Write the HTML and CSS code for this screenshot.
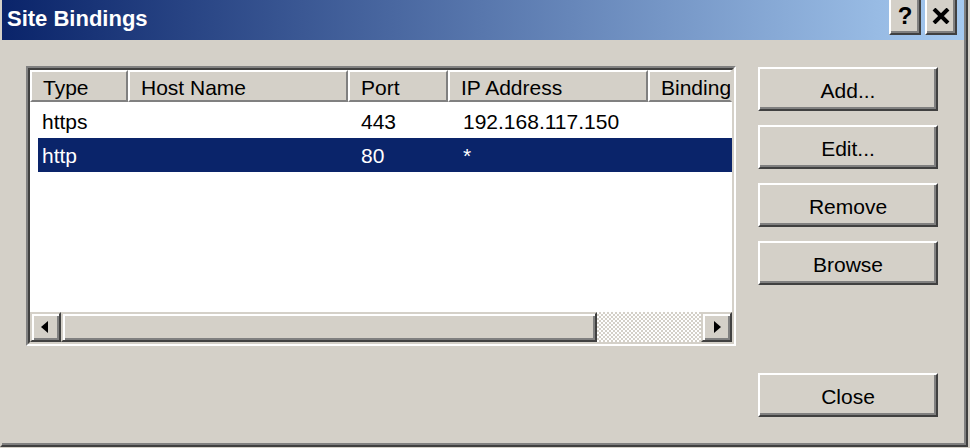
FILE: index.html
```html
<!DOCTYPE html>
<html lang="en">
<head>
    <meta charset="UTF-8">
    <title>Site Bindings</title>
    <link rel="stylesheet" href="styles.css">
</head>
<body>
    <div class="window">
        <div class="titlebar">
            <span class="title">Site Bindings</span>
            <div class="caption-btns">
                <div class="cap-btn help">?</div>
                <div class="cap-btn">
                    <svg width="18" height="16" viewBox="0 0 18 16">
                        <path d="M2 1 L16 15 M16 1 L2 15" stroke="#000" stroke-width="4" fill="none"/>
                    </svg>
                </div>
            </div>
        </div>

        <div class="content">
            <div class="listbox">
                <div class="list-inner">
                    <div class="header">
                        <div class="hcell">Type</div>
                        <div class="hcell">Host Name</div>
                        <div class="hcell">Port</div>
                        <div class="hcell">IP Address</div>
                        <div class="hcell last">Binding</div>
                    </div>
                    <div class="rows">
                        <div class="row">
                            <div class="cell first">https</div>
                            <div class="cell"></div>
                            <div class="cell">443</div>
                            <div class="cell ip">192.168.117.150</div>
                            <div class="cell"></div>
                        </div>
                        <div class="row selected">
                            <div class="cell first">http</div>
                            <div class="cell"></div>
                            <div class="cell">80</div>
                            <div class="cell ip">*</div>
                            <div class="cell"></div>
                        </div>
                    </div>
                    <div class="hscroll">
                        <div class="sb-btn"><span class="arrow-left"></span></div>
                        <div class="sb-thumb"></div>
                        <div class="sb-track"></div>
                        <div class="sb-btn"><span class="arrow-right"></span></div>
                    </div>
                </div>
            </div>

            <div class="actions">
                <div class="btn">Add...</div>
                <div class="btn">Edit...</div>
                <div class="btn">Remove</div>
                <div class="btn">Browse</div>
                <div class="btn close">Close</div>
            </div>
        </div>
    </div>
</body>
</html>
```

FILE: styles.css
```css
html, body {
    margin: 0;
    background-color: #d4d0c8;
    overflow: hidden;
}
body {
    font-family: "Liberation Sans", Arial, sans-serif;
    font-size: 21px;
    color: #000;
}
div.window {
    width: 968px;
    height: 447px;
    box-sizing: border-box;
    background-color: #d4d0c8;
    border-left: 2px solid #d4d0c8;
    border-right: 2px solid #404040;
    border-bottom: 2px solid #404040;
    box-shadow: inset -2px -2px 0 #808080;
    display: flex;
    flex-direction: column;
}

/* title bar */
div.titlebar {
    height: 40px;
    flex: none;
    margin-right: 2px;
    box-sizing: border-box;
    padding: 0 7px 3px 5px;
    background: linear-gradient(to right, #0a246a, #a6caf0);
    display: flex;
    align-items: center;
    justify-content: space-between;
}
span.title {
    color: white;
    font-weight: bold;
    font-size: 22px;
}
div.caption-btns {
    display: flex;
    gap: 4px;
    align-self: flex-start;
    margin-top: -2px;
}
div.cap-btn {
    width: 32px;
    height: 37px;
    box-sizing: border-box;
    background-color: #d4d0c8;
    border: 2px solid;
    border-color: #fff #404040 #404040 #fff;
    box-shadow: inset -2px -2px 0 #808080;
    display: flex;
    align-items: center;
    justify-content: center;
    padding-bottom: 2px;
}
div.cap-btn.help {
    font-weight: bold;
    font-size: 24px;
    line-height: 1;
}

/* main area */
div.content {
    display: flex;
    gap: 22px;
    padding: 26px 0 0 24px;
}
div.listbox {
    width: 710px;
    height: 280px;
    box-sizing: border-box;
    border: 2px solid;
    border-color: #808080 #fff #fff #808080;
}
div.list-inner {
    height: 100%;
    box-sizing: border-box;
    border: 2px solid;
    border-color: #404040 #d4d0c8 #d4d0c8 #404040;
    background-color: white;
    display: flex;
    flex-direction: column;
    overflow: hidden;
}

div.header {
    display: grid;
    grid-template-columns: 98px 220px 100px 200px 1fr;
    height: 32px;
    flex: none;
}
div.hcell {
    box-sizing: border-box;
    background-color: #d4d0c8;
    border: 2px solid;
    border-color: #fff #808080 #808080 #fff;
    padding: 3px 0 0 11px;
    line-height: 26px;
    white-space: nowrap;
    overflow: hidden;
}
div.hcell.last {
    border-right-color: #d4d0c8;
}

div.rows {
    padding-top: 2px;
}
div.row {
    margin-left: 8px;
    height: 34px;
    display: grid;
    grid-template-columns: 90px 220px 100px 200px 1fr;
    box-sizing: border-box;
    padding-top: 2px;
    line-height: 32px;
    white-space: nowrap;
}
div.row.selected {
    background-color: #0a246a;
    color: white;
}
div.cell {
    padding-left: 13px;
}
div.cell.first {
    padding-left: 4px;
}
div.cell.ip {
    padding-left: 15px;
}

/* horizontal scrollbar */
div.hscroll {
    margin-top: auto;
    height: 30px;
    flex: none;
    display: flex;
}
div.sb-btn, div.sb-thumb {
    box-sizing: border-box;
    background-color: #d4d0c8;
    border: 2px solid;
    border-color: #d4d0c8 #404040 #404040 #d4d0c8;
    box-shadow: inset 2px 2px 0 #fff, inset -2px -2px 0 #808080;
}
div.sb-btn {
    width: 31px;
    display: flex;
    align-items: center;
    justify-content: center;
}
div.sb-thumb {
    width: 536px;
}
div.sb-track {
    flex: 1;
    background-color: #fff;
    background-image: repeating-conic-gradient(#d4d0c8 0 25%, #fff 0 50%);
    background-size: 4px 4px;
}
span.arrow-left {
    width: 0;
    height: 0;
    border-top: 6px solid transparent;
    border-bottom: 6px solid transparent;
    border-right: 7px solid #000;
    margin-right: 3px;
}
span.arrow-right {
    width: 0;
    height: 0;
    border-top: 6px solid transparent;
    border-bottom: 6px solid transparent;
    border-left: 7px solid #000;
    margin-left: 1px;
}

/* buttons */
div.actions {
    width: 180px;
    height: 351px;
    box-sizing: border-box;
    padding-top: 1px;
    display: flex;
    flex-direction: column;
    gap: 14px;
}
div.btn {
    height: 44px;
    box-sizing: border-box;
    border: 2px solid;
    border-color: #fff #404040 #404040 #fff;
    box-shadow: inset -2px -2px 0 #808080;
    display: flex;
    align-items: center;
    justify-content: center;
    padding-top: 3px;
}
div.btn.close {
    margin-top: auto;
}
```
